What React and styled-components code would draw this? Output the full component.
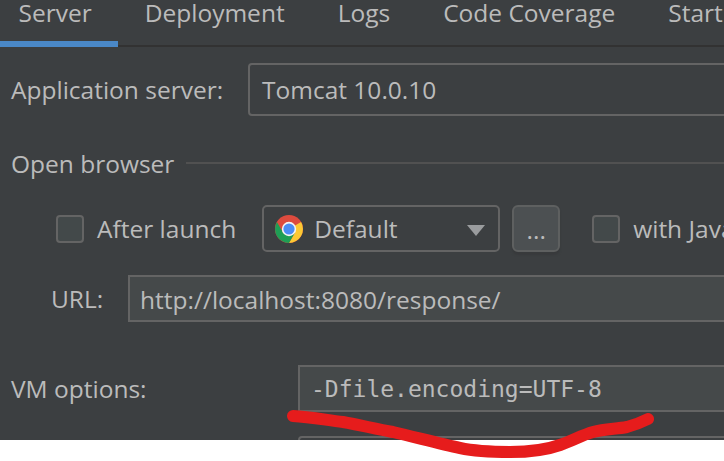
import React from "react";
import styled, { createGlobalStyle } from "styled-components";

const GlobalStyle = createGlobalStyle`
  html, body {
    margin: 0;
    padding: 0;
    background: #ffffff;
    overflow: hidden;
  }
`;

const tabs = ["Server", "Deployment", "Logs", "Code Coverage", "Startup/Connection"];

function ChromeIcon() {
  return (
    <svg width="28" height="28" viewBox="0 0 28 28">
      <circle cx="14" cy="14" r="14" fill="#dd4b3e" />
      <path d="M14 28 A14 14 0 0 0 26.1 7 L14 7 L20 17.5 Z" fill="#fcc934" />
      <path d="M1.9 7 A14 14 0 0 0 14 28 L20 17.5 L8 17.5 Z" fill="#1e9e55" />
      <path d="M14 14 L26.1 7 L14 7 Z" fill="#dd4b3e" />
      <circle cx="14" cy="14" r="7.2" fill="#f4f4f4" />
      <circle cx="14" cy="14" r="5.6" fill="#4b8df5" />
    </svg>
  );
}

function App() {
  return (
    <>
      <GlobalStyle />
      <Stage>
        <Panel>
          <TabBar>
            {tabs.map((tab, i) => (
              <Tab key={tab} active={i === 0}>
                {tab}
              </Tab>
            ))}
          </TabBar>
          <Form>
            <Row>
              <Label width="237px">Application server:</Label>
              <ComboField>Tomcat 10.0.10</ComboField>
            </Row>
            <Section>
              <SectionTitle>Open browser</SectionTitle>
              <SectionLine />
            </Section>
            <BrowserRow>
              <Checkbox />
              <CheckLabel>After launch</CheckLabel>
              <BrowserSelect>
                <ChromeIcon />
                <span>Default</span>
                <Caret />
              </BrowserSelect>
              <DotsButton>...</DotsButton>
              <Checkbox />
              <CheckLabel>with JavaScript debugger</CheckLabel>
            </BrowserRow>
            <UrlRow>
              <Label width="77px">URL:</Label>
              <TextField>http://localhost:8080/response/</TextField>
            </UrlRow>
            <VmRow>
              <Label width="287px">VM options:</Label>
              <TextField mono>-Dfile.encoding=UTF-8</TextField>
            </VmRow>
            <NextRow>
              <NextField />
            </NextRow>
          </Form>
        </Panel>
        <Scribble viewBox="0 0 724 461" width="724" height="461">
          <path d="M293 416 C310 417 326 420 343 422 C360 425 376 429 393 432 C415 437 440 444 460 448 C478 452 495 452 510 452 C530 452 546 450 560 445 C572 441 582 435 593 432 C605 429 616 429 627 427 C635 425 642 422 648 419" />
        </Scribble>
      </Stage>
    </>
  );
}

const Stage = styled.div`
  position: relative;
  width: 724px;
  height: 461px;
  overflow: hidden;
  background: #ffffff;
`;

const Panel = styled.div`
  width: 724px;
  height: 440px;
  overflow: hidden;
  background: #3c3f41;
  color: #bbbbbb;
  font-family: "Open Sans", "Noto Sans", sans-serif;
  font-size: 24.5px;
`;

const TabBar = styled.div`
  display: flex;
  width: 800px;
  height: 45px;
  margin-left: -8px;
  border-bottom: 2px solid #323232;
`;

const Tab = styled.div`
  box-sizing: border-box;
  height: 47px;
  padding: 0 26.5px;
  line-height: 26px;
  white-space: nowrap;
  border-bottom: 6px solid ${(props) => (props.active ? "#4a88c7" : "transparent")};
`;

const Form = styled.div`
  width: 780px;
  padding: 16px 0 0 11px;
`;

const Row = styled.div`
  display: flex;
  align-items: center;
`;

const Label = styled.div`
  flex: none;
  width: ${(props) => props.width};
  white-space: nowrap;
`;

const ComboField = styled.div`
  flex: 1;
  box-sizing: border-box;
  height: 53px;
  padding-left: 12px;
  line-height: 50px;
  border: 2px solid #646464;
  border-radius: 4px;
`;

const Section = styled.div`
  display: flex;
  align-items: center;
  gap: 12px;
  height: 34px;
  margin-top: 30px;
`;

const SectionTitle = styled.div`
  white-space: nowrap;
`;

const SectionLine = styled.div`
  flex: 1;
  height: 2px;
  background: #515151;
`;

const BrowserRow = styled(Row)`
  margin-top: 25px;
  padding-left: 45px;
`;

const Checkbox = styled.div`
  flex: none;
  box-sizing: border-box;
  width: 28px;
  height: 28px;
  border: 2px solid #646464;
  border-radius: 4px;
  background: #43494a;
`;

const CheckLabel = styled.div`
  margin-left: 13px;
  white-space: nowrap;
`;

const BrowserSelect = styled.div`
  flex: none;
  display: flex;
  align-items: center;
  gap: 11px;
  position: relative;
  box-sizing: border-box;
  width: 238px;
  height: 47px;
  margin-left: 26px;
  padding-left: 11px;
  border: 2px solid #646464;
  border-radius: 5px;
`;

const Caret = styled.div`
  position: absolute;
  right: 13px;
  top: 18px;
  width: 0;
  height: 0;
  border-left: 9px solid transparent;
  border-right: 9px solid transparent;
  border-top: 11px solid #9a9c9e;
`;

const DotsButton = styled.div`
  flex: none;
  box-sizing: border-box;
  width: 48px;
  height: 47px;
  margin: 0 32px 0 12px;
  text-align: center;
  line-height: 46px;
  border: 2px solid #5e6060;
  border-radius: 6px;
  background: #4c5052;
  box-shadow: 0 3px 2px #383a3c;
`;

const UrlRow = styled(Row)`
  margin-top: 23px;
  padding-left: 40px;
`;

const TextField = styled.div`
  flex: 1;
  box-sizing: border-box;
  height: 47px;
  padding-left: ${(props) => (props.mono ? "11px" : "10px")};
  line-height: 45px;
  border: 2px solid #646464;
  background: #45494a;
  white-space: nowrap;
  font-family: ${(props) => (props.mono ? '"DejaVu Sans Mono", "Liberation Mono", monospace' : "inherit")};
  font-size: ${(props) => (props.mono ? "23px" : "24.5px")};
`;

const VmRow = styled(Row)`
  margin-top: 43px;
`;

const NextRow = styled.div`
  display: flex;
  justify-content: flex-end;
  margin-top: 24px;
`;

const NextField = styled.div`
  box-sizing: border-box;
  width: 493px;
  height: 47px;
  border: 2px solid #646464;
  border-radius: 4px;
`;

const Scribble = styled.svg`
  position: absolute;
  left: 0;
  top: 0;
  fill: none;
  stroke: #e61c1c;
  stroke-width: 12;
  stroke-linecap: round;
  stroke-linejoin: round;
`;

export default App;
